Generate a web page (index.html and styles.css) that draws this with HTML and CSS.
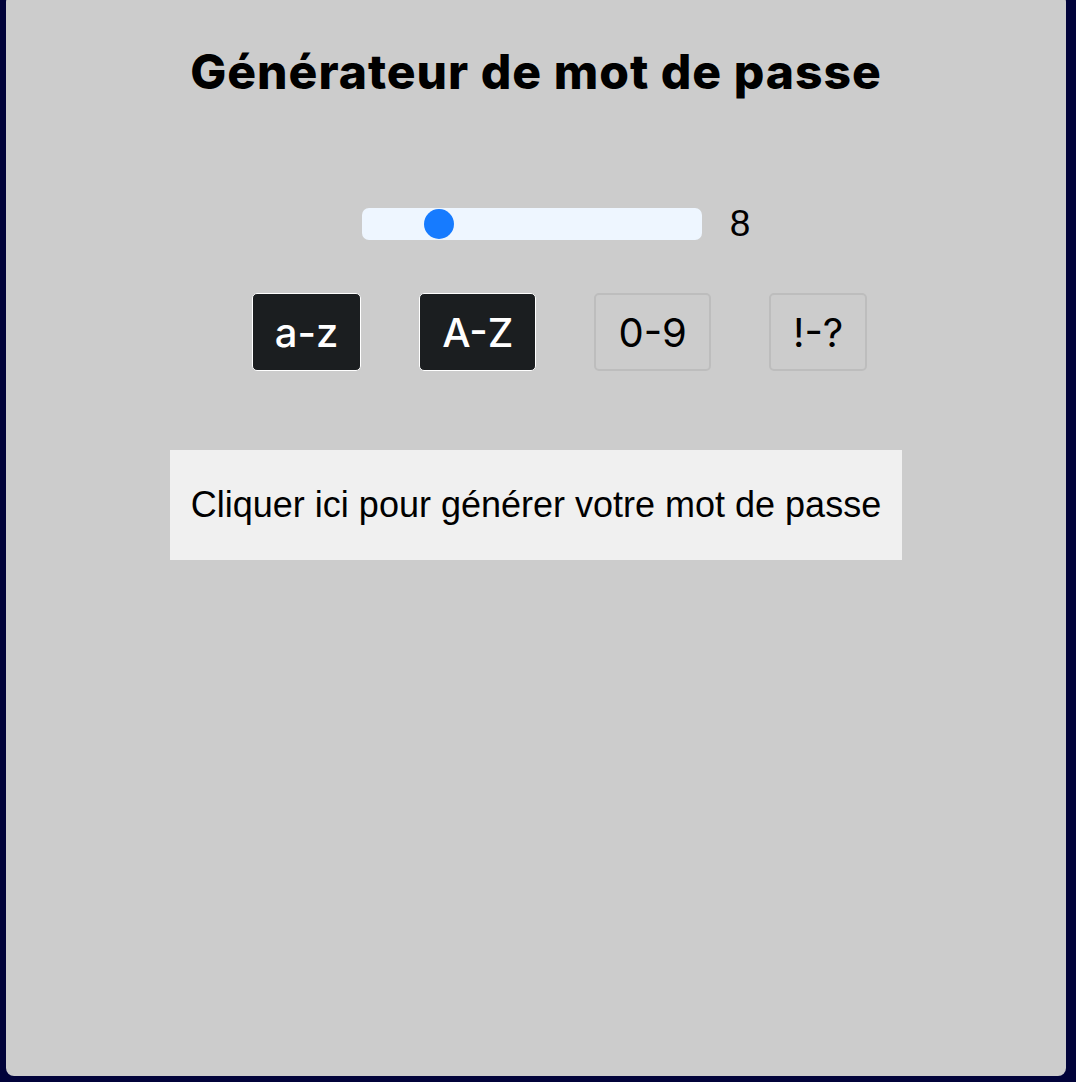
FILE: index.html
```html
<!DOCTYPE html>
<html lang="fr">
<head>
<meta charset="utf-8">
<title>Générateur de mot de passe</title>
<link rel="stylesheet" href="styles.css">
</head>
<body>
<main class="card">
  <h1 class="title">Générateur de mot de passe</h1>
  <div class="length-row">
    <input class="range" type="range" min="4" max="24" value="8">
    <span class="length-value">8</span>
  </div>
  <div class="options">
    <button class="opt opt-active">a-z</button>
    <button class="opt opt-active">A-Z</button>
    <button class="opt">0-9</button>
    <button class="opt">!-?</button>
  </div>
  <div class="output">Cliquer ici pour générer votre mot de passe</div>
</main>
</body>
</html>
```
FILE: styles.css
```css
html, body {
  margin: 0;
  padding: 0;
  height: 100%;
  overflow: hidden;
}
body {
  background: #01033a;
  font-family: "Liberation Sans", Arial, sans-serif;
}
.card {
  box-sizing: border-box;
  margin: -6px 10px 0 6px;
  height: 1082px;
  background: #cccccc;
  border-radius: 8px;
  display: flex;
  flex-direction: column;
  align-items: center;
  padding-top: 50px;
}
.title {
  margin: 0;
  font-family: Inter, "Noto Sans", sans-serif;
  font-weight: 800;
  font-size: 48px;
  line-height: 56px;
  color: #000;
  letter-spacing: 1px;
}
.length-row {
  display: flex;
  align-items: center;
  gap: 28px;
  margin-top: 104px;
  padding-left: 40px;
}
.range {
  -webkit-appearance: none;
  appearance: none;
  margin: 0;
  width: 340px;
  height: 32px;
  background: #eef6ff;
  border-radius: 7px;
  outline: none;
}
.range::-webkit-slider-thumb {
  -webkit-appearance: none;
  appearance: none;
  width: 30px;
  height: 30px;
  border-radius: 50%;
  background: #167bff;
  border: none;
}
.length-value {
  font-size: 37px;
  line-height: 40px;
  color: #000;
}
.options {
  display: flex;
  gap: 58px;
  margin-top: 49px;
  padding-left: 47px;
}
.opt {
  box-sizing: border-box;
  height: 78px;
  padding: 0 22px;
  font-family: Inter, "Noto Sans", sans-serif;
  font-size: 40px;
  font-weight: 400;
  color: #000;
  background: transparent;
  border: 2px solid #bdbdbd;
  border-radius: 5px;
}
.opt-active {
  background: #1b1e20;
  color: #fff;
  border: 1px solid #fff;
  font-weight: 500;
}
.output {
  box-sizing: border-box;
  margin-top: 79px;
  width: 732px;
  height: 110px;
  display: flex;
  align-items: center;
  justify-content: center;
  background: #f0f0f0;
  font-size: 36px;
  color: #000;
}
```
